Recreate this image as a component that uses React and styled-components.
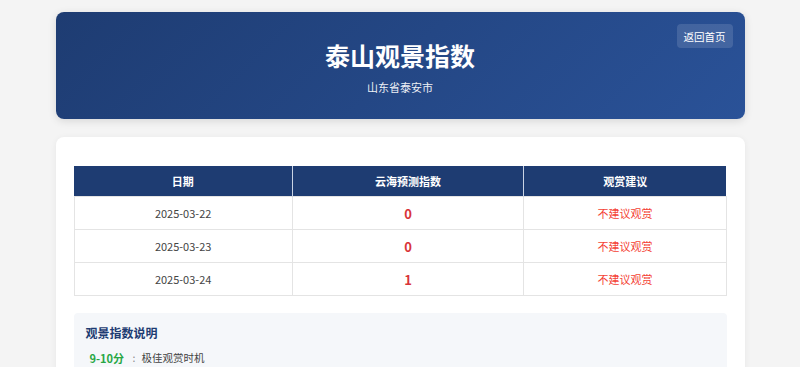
import React from 'react';
import styled, { createGlobalStyle } from 'styled-components';

const GlobalStyle = createGlobalStyle`
	body {
		margin: 0;
		background: #f4f4f4;
		font-family: 'Noto Sans CJK SC', 'Noto Sans', sans-serif;
		color: #333;
	}
`;

const Page = styled.div`
	width: 689px;
	margin: 12px auto 0 auto;
	display: flex;
	flex-direction: column;
	gap: 18px;
`;

const Header = styled.header`
	position: relative;
	background: linear-gradient(135deg, #1e3c72 0%, #2a5298 100%);
	border-radius: 8px;
	color: #fff;
	text-align: center;
	padding: 27px 20px 25px 20px;
	box-shadow: 0 2px 8px rgba(0, 0, 0, 0.12);
`;

const Title = styled.h1`
	margin: 0;
	font-size: 25px;
	line-height: 32px;
	font-weight: 700;
`;

const Subtitle = styled.p`
	margin: 9px 0 0 0;
	font-size: 11px;
	line-height: 14px;
	opacity: 0.92;
`;

const BackButton = styled.button`
	position: absolute;
	top: 12px;
	right: 12px;
	height: 24px;
	padding: 0 7px;
	border: none;
	border-radius: 4px;
	background: rgba(255, 255, 255, 0.13);
	color: #fff;
	font-family: inherit;
	font-size: 10.5px;
	cursor: pointer;
`;

const Card = styled.section`
	background: #fff;
	border-radius: 8px;
	padding: 29px 18px 0 18px;
	box-shadow: 0 1px 6px rgba(0, 0, 0, 0.06);
`;

const Table = styled.table`
	width: 100%;
	border-collapse: collapse;
	table-layout: fixed;
	font-size: 11px;
`;

const Th = styled.th`
	width: ${(p) => p.$w};
	height: 30px;
	padding: 0;
	background: #1e3c72;
	color: #fff;
	font-weight: 700;
	border: 1px solid #c9d3e4;
	border-top: none;
	border-bottom: none;
	&:first-child { border-left: none; }
	&:last-child { border-right: none; }
`;

const Td = styled.td`
	height: 32px;
	padding: 0;
	text-align: center;
	border: 1px solid #e4e4e4;
	color: ${(p) => p.$color || '#444'};
	font-weight: ${(p) => (p.$bold ? 700 : 400)};
	font-size: ${(p) => (p.$big ? '13px' : '11px')};
`;

const Legend = styled.div`
	margin-top: 17px;
	background: #f5f7fa;
	border-radius: 4px;
	padding: 11px 12px 10px 12px;
`;

const LegendTitle = styled.h3`
	margin: 0 0 8px 0;
	font-size: 12px;
	line-height: 18px;
	font-weight: 700;
	color: #1e3c72;
`;

const LegendItem = styled.div`
	display: flex;
	align-items: center;
	padding-left: 4px;
	font-size: 10.5px;
	line-height: 16px;
	color: #444;
`;

const Score = styled.span`
	flex: none;
	width: 43px;
	font-weight: 700;
	font-size: 11px;
	color: ${(p) => p.$color};
`;

const Sep = styled.span`
	flex: none;
	width: 9px;
	color: #888;
`;

const rows = [
	{ date: '2025-03-22', score: 0, advice: '不建议观赏' },
	{ date: '2025-03-23', score: 0, advice: '不建议观赏' },
	{ date: '2025-03-24', score: 1, advice: '不建议观赏' },
];

const legend = [
	{ range: '9-10分', text: '极佳观赏时机', color: '#28a745' },
];

export default function App() {
	return (
		<>
			<GlobalStyle />
			<Page>
				<Header>
					<Title>泰山观景指数</Title>
					<Subtitle>山东省泰安市</Subtitle>
					<BackButton>返回首页</BackButton>
				</Header>
				<Card>
					<Table>
						<thead>
							<tr>
								<Th $w="33.5%">日期</Th>
								<Th $w="35.5%">云海预测指数</Th>
								<Th $w="31%">观赏建议</Th>
							</tr>
						</thead>
						<tbody>
							{rows.map((r) => (
								<tr key={r.date}>
									<Td>{r.date}</Td>
									<Td $bold $big $color="#d9343a">{r.score}</Td>
									<Td $color="#f44336">{r.advice}</Td>
								</tr>
							))}
						</tbody>
					</Table>
					<Legend>
						<LegendTitle>观景指数说明</LegendTitle>
						{legend.map((l) => (
							<LegendItem key={l.range}>
								<Score $color={l.color}>{l.range}</Score>
								<Sep>:</Sep>
								<span>{l.text}</span>
							</LegendItem>
						))}
					</Legend>
				</Card>
			</Page>
		</>
	);
}
